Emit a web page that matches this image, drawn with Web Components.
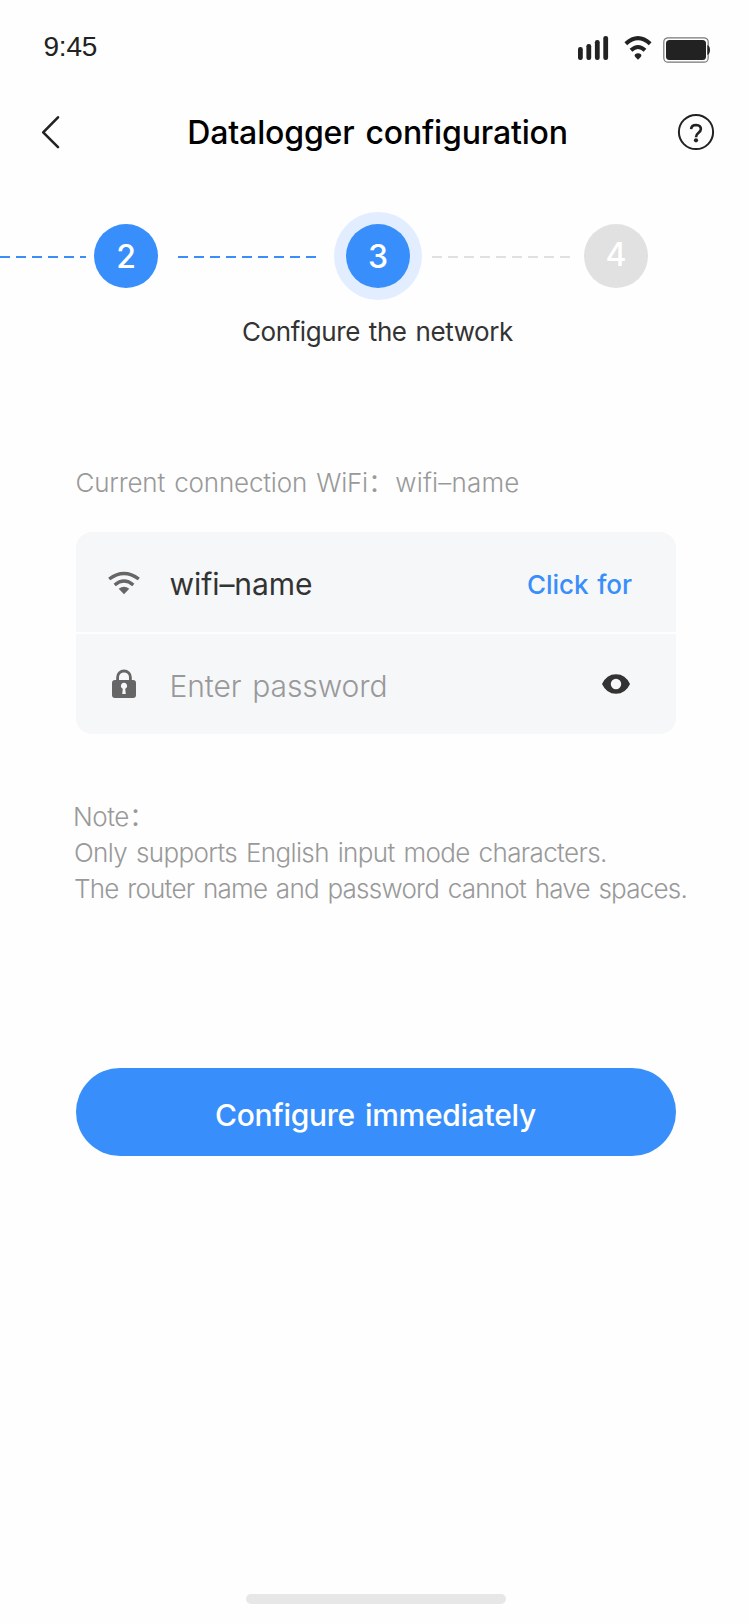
<!DOCTYPE html>
<html lang="en">
<head>
<meta charset="utf-8">
<title>Datalogger configuration</title>
<style>
html,body{margin:0;background:#fefefe;}
body{width:750px;height:1624px;overflow:hidden;font-family:Inter,"Noto Sans CJK SC",sans-serif;}
</style>
</head>
<body>
<config-page></config-page>
<script>
const define = (name, html) => {
  const template = document.createElement('template');
  template.innerHTML = html;
  customElements.define(name, class extends HTMLElement {
    constructor() {
      super();
      this.attachShadow({ mode: 'open' }).append(template.content.cloneNode(true));
    }
  });
};

/* One line of text, tracked so that its ink spans the given width. */
customElements.define('text-line', class extends HTMLElement {
  constructor() {
    super();
    this.attachShadow({ mode: 'open' }).innerHTML =
      '<style>:host{display:block;flex:none;white-space:nowrap;line-height:40px;height:40px}span{display:inline-block}</style><span><slot></slot></span>';
  }
  connectedCallback() {
    const span = this.shadowRoot.querySelector('span');
    const text = this.textContent;
    const width = Number(this.getAttribute('ink'));
    const cs = getComputedStyle(this);
    const ctx = document.createElement('canvas').getContext('2d');
    ctx.font = `${cs.fontWeight} ${cs.fontSize} ${cs.fontFamily}`;
    const m = ctx.measureText(text);
    const wordSpacing = parseFloat(cs.fontSize) * 0.08;
    const natural = m.actualBoundingBoxRight + m.actualBoundingBoxLeft + wordSpacing * (text.split(' ').length - 1);
    this.style.width = width + 'px';
    span.style.wordSpacing = wordSpacing + 'px';
    span.style.letterSpacing = (width - natural) / (text.length - 1) + 'px';
    span.style.marginLeft = m.actualBoundingBoxLeft + 'px';
  }
});

define('status-bar', `
<style>
:host{display:flex;justify-content:space-between;align-items:flex-start;height:76px;padding:0 40px 0 43.5px;box-sizing:border-box;color:#222}
time{font:28px/32px "Liberation Sans",Arial,sans-serif;padding-top:31px;letter-spacing:-.2px}
svg{margin-top:34px}
</style>
<time>9:45</time>
<svg width="134" height="30" viewBox="576 34 134 30" fill="#222">
<rect x="578" y="47" width="4.8" height="13" rx="2.2"/><rect x="586.4" y="44" width="4.8" height="16" rx="2.2"/><rect x="594.9" y="40" width="4.8" height="20" rx="2.2"/><rect x="603.3" y="36" width="4.8" height="24" rx="2.2"/>
<path d="M625.8 43.8Q638 32.4 650.2 43.8M631 50.3Q638 43.7 645 50.3" fill="none" stroke="#222" stroke-width="4"/>
<path d="M634.6 56Q634.6 53.2 638 53.2Q641.4 53.2 641.4 56Q640.8 57.3 638 59.7Q635.2 57.3 634.6 56Z"/>
<rect x="663.8" y="37.8" width="44.4" height="24.4" rx="4.2" fill="none" stroke="#777" stroke-width="1.2"/>
<rect x="666" y="40" width="40" height="20" rx="3.5"/><path d="M707.3 45Q710 46 710 50Q710 54 707.3 55Z"/>
</svg>`);

define('nav-header', `
<style>
:host{display:flex;align-items:center;justify-content:space-between;height:112px;padding:0 35px 0 40px;box-sizing:border-box}
svg{flex:none}
.title{font-size:32px;font-weight:500;color:#000;margin:2px 0 0 18px}
</style>
<svg width="20" height="36" viewBox="40 114 20 36"><path d="M58 117.3L43.2 132.3L58 147.2" fill="none" stroke="#222" stroke-width="2.6" stroke-linecap="round" stroke-linejoin="round"/></svg>
<text-line class="title" ink="376.5">Datalogger configuration</text-line>
<svg width="38" height="38" viewBox="677 113 38 38"><circle cx="696" cy="132" r="17.1" fill="none" stroke="#222" stroke-width="2"/><path d="M691.1 129.1Q691.4 125 696.1 125Q700.9 125.2 700.9 129.1Q700.9 131 698.3 133Q696 134.7 696 137.2" fill="none" stroke="#222" stroke-width="2.6"/><circle cx="696" cy="140.3" r="2.1" fill="#222"/></svg>`);

define('step-dot', `
<style>
:host{display:flex;justify-content:center;box-sizing:border-box;width:64px;height:64px;border-radius:50%;background:#388efa;color:#fff;font-size:32px;font-weight:500;line-height:66px;flex:none}
:host([current]){box-shadow:0 0 0 12px #e2eeff}
:host([pending]){background:#e1e1e1;line-height:61px}
</style><slot></slot>`);

define('step-link', `
<style>
:host{display:block;height:2px;margin-top:2px;flex:none;background:repeating-linear-gradient(90deg,#388efa 0 10px,transparent 10px 16px)}
:host([pending]){background:repeating-linear-gradient(90deg,#e0e0e0 0 10px,transparent 10px 16px)}
</style>`);

define('step-track', `
<style>
:host{display:block;height:160px}
.row{display:flex;align-items:center;height:64px;padding-top:36px}
.a{width:86px;margin-right:8px}.b{width:138px;margin:2px 30px 0 20px}.c{width:138px;margin:2px 14px 0 22px}
.label{padding-left:6px;width:270px;margin:23.5px auto 0;font-size:26px;font-weight:400;color:#333}
</style>
<div class="row"><step-link class="a"></step-link><step-dot>2</step-dot><step-link class="b"></step-link><step-dot current>3</step-dot><step-link class="c" pending></step-link><step-dot pending>4</step-dot></div>
<div class="label"><text-line ink="270">Configure the network</text-line></div>`);

define('field-row', `
<style>
:host{display:flex;align-items:center;height:100px;background:#f6f7f9;padding:0 44px 0 30px}
.icon{display:flex;width:64.5px;flex:none}
.end{margin-left:auto;display:flex}
</style>
<div class="icon"><slot name="icon"></slot></div><slot></slot><div class="end"><slot name="end"></slot></div>`);

define('wifi-form', `
<style>
:host{display:block;padding:0 74px 0 76px}
.current{display:flex;font-size:26px;font-weight:350;color:#999;padding-left:.5px}
.current text-line+text-line{margin-left:18.3px}
.card{display:flex;flex-direction:column;gap:2px;border-radius:16px;overflow:hidden;margin-top:29px}
.name{font-size:30px;font-weight:400;color:#333;padding-top:4px}
.wifi{margin-top:2px}
.password{font-size:30px;font-weight:350;color:#999;padding:4px 0 0 1px}
.link{font-size:26px;font-weight:500;color:#388efa;padding-top:5px}
.eye{margin-right:1px}
</style>
<div class="current"><text-line ink="300.5">Current connection WiFi：</text-line><text-line ink="123">wifi–name</text-line></div>
<div class="card">
<field-row>
<svg class="wifi" slot="icon" width="36" height="26" viewBox="106 570 36 26" fill="none" stroke="#666" stroke-width="3.4"><path d="M109.2 579Q124 568 138.8 579M114.7 585Q124 577.2 133.3 585"/><path d="M118.7 588.8Q124 584.8 129.3 588.8L124 594.2Z" fill="#666" stroke="none"/></svg>
<text-line class="name" ink="141.5">wifi–name</text-line>
<text-line slot="end" class="link" ink="104">Click for</text-line>
</field-row>
<field-row>
<svg slot="icon" width="36" height="30" viewBox="106 669 36 30"><path d="M117.6 681V677.2A6.4 6.2 0 0 1 130.4 677.2V681" fill="none" stroke="#666" stroke-width="2.8"/><rect x="112" y="680" width="24" height="18" rx="3" fill="#666"/><path d="M122.8 688.8L122.2 694H125.8L125.2 688.8A3.1 3.1 0 1 0 122.8 688.8Z" fill="#f6f7f9"/></svg>
<text-line class="password" ink="214">Enter password</text-line>
<svg class="eye" slot="end" width="30" height="22" viewBox="601 673 30 22"><path fill-rule="evenodd" fill="#333" d="M602 684Q606.5 674.2 616 674.2T630 684Q625.5 693.8 616 693.8T602 684ZM610.8 684a5.2 5.2 0 1 0 10.4 0a5.2 5.2 0 1 0-10.4 0Z"/></svg>
</field-row>
</div>`);

define('note-text', `
<style>
:host{display:block;padding:0 0 0 75px;font-size:26px;font-weight:350;color:#999}
text-line{line-height:36px;height:36px}
</style>
<text-line ink="63">Note：</text-line>
<text-line ink="531">Only supports English input mode characters.</text-line>
<text-line ink="611.5">The router name and password cannot have spaces.</text-line>`);

define('primary-button', `
<style>
:host{display:block;padding:0 74px 0 76px}
button{display:flex;width:100%;height:88px;border:0;border-radius:44px;background:#388efa;color:#fff;align-items:center;justify-content:center;padding:6px 0 0;font:inherit;font-size:30px;font-weight:500}
</style>
<button><slot></slot></button>`);

define('home-indicator', `
<style>:host{display:block;width:260px;height:10px;border-radius:5px;background:#e7e7e7;margin:auto auto 20px 246px}</style>`);

define('config-page', `
<style>
:host{display:flex;flex-direction:column;height:1624px}
status-bar,nav-header,step-track,wifi-form,note-text,primary-button{flex:none}
wifi-form{margin-top:115px}note-text{margin-top:65px}primary-button{margin-top:161px}
.cta{font-size:30px;font-weight:450}
</style>
<status-bar></status-bar>
<nav-header></nav-header>
<step-track></step-track>
<wifi-form></wifi-form>
<note-text></note-text>
<primary-button><text-line class="cta" ink="320">Configure immediately</text-line></primary-button>
<home-indicator></home-indicator>`);
</script>
</body>
</html>
